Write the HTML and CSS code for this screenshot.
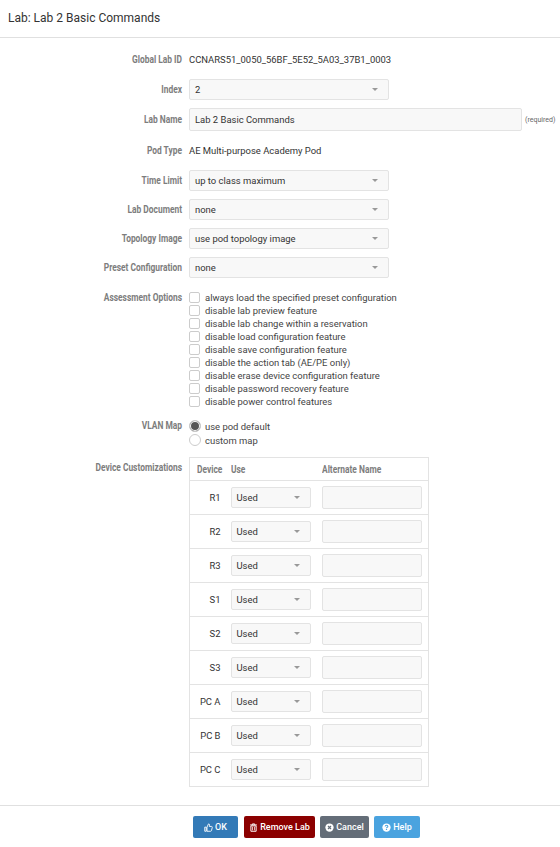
FILE: index.html
```html
<!DOCTYPE html>
<html lang="en">
<head>
    <meta charset="UTF-8">
    <title>Lab: Lab 2 Basic Commands</title>
    <link rel="stylesheet" href="styles.css">
</head>
<body>
    <header class="dialog-title">Lab: Lab 2 Basic Commands</header>

    <form class="lab-form">
        <div class="row row-id">
            <label class="row-label">Global Lab ID</label>
            <span class="value">CCNARS51_0050_56BF_5E52_5A03_37B1_0003</span>
        </div>
        <div class="row row-index">
            <label class="row-label">Index</label>
            <div class="select"><span>2</span><i class="caret"></i></div>
        </div>
        <div class="row row-name">
            <label class="row-label">Lab Name</label>
            <div class="text-input">Lab 2 Basic Commands</div>
            <span class="hint">(required)</span>
        </div>
        <div class="row row-pod">
            <label class="row-label">Pod Type</label>
            <span class="value">AE Multi-purpose Academy Pod</span>
        </div>
        <div class="row row-time">
            <label class="row-label">Time Limit</label>
            <div class="select"><span>up to class maximum</span><i class="caret"></i></div>
        </div>
        <div class="row">
            <label class="row-label">Lab Document</label>
            <div class="select"><span>none</span><i class="caret"></i></div>
        </div>
        <div class="row">
            <label class="row-label">Topology Image</label>
            <div class="select"><span>use pod topology image</span><i class="caret"></i></div>
        </div>
        <div class="row row-preset">
            <label class="row-label">Preset Configuration</label>
            <div class="select"><span>none</span><i class="caret"></i></div>
        </div>

        <div class="row row-top row-options">
            <label class="row-label">Assessment Options</label>
            <div class="checks">
                <div class="check"><i class="box"></i>always load the specified preset configuration</div>
                <div class="check"><i class="box"></i>disable lab preview feature</div>
                <div class="check"><i class="box"></i>disable lab change within a reservation</div>
                <div class="check"><i class="box"></i>disable load configuration feature</div>
                <div class="check"><i class="box"></i>disable save configuration feature</div>
                <div class="check"><i class="box"></i>disable the action tab (AE/PE only)</div>
                <div class="check"><i class="box"></i>disable erase device configuration feature</div>
                <div class="check"><i class="box"></i>disable password recovery feature</div>
                <div class="check"><i class="box"></i>disable power control features</div>
            </div>
        </div>

        <div class="row row-top row-vlan">
            <label class="row-label">VLAN Map</label>
            <div class="radios">
                <div class="radio-row"><i class="radio on"></i>use pod default</div>
                <div class="radio-row"><i class="radio"></i>custom map</div>
            </div>
        </div>

        <div class="row row-top">
            <label class="row-label label-table">Device Customizations</label>
            <table class="devices">
                <thead>
                    <tr>
                        <th class="col-device"><span>Device</span></th>
                        <th class="col-use"><span>Use</span></th>
                        <th class="col-alt"><span>Alternate Name</span></th>
                    </tr>
                </thead>
                <tbody>
                    <tr><td class="col-device">R1</td><td><div class="select select-small"><span>Used</span><i class="caret"></i></div></td><td><div class="name-input"></div></td></tr>
                    <tr><td class="col-device">R2</td><td><div class="select select-small"><span>Used</span><i class="caret"></i></div></td><td><div class="name-input"></div></td></tr>
                    <tr><td class="col-device">R3</td><td><div class="select select-small"><span>Used</span><i class="caret"></i></div></td><td><div class="name-input"></div></td></tr>
                    <tr><td class="col-device">S1</td><td><div class="select select-small"><span>Used</span><i class="caret"></i></div></td><td><div class="name-input"></div></td></tr>
                    <tr><td class="col-device">S2</td><td><div class="select select-small"><span>Used</span><i class="caret"></i></div></td><td><div class="name-input"></div></td></tr>
                    <tr><td class="col-device">S3</td><td><div class="select select-small"><span>Used</span><i class="caret"></i></div></td><td><div class="name-input"></div></td></tr>
                    <tr><td class="col-device">PC A</td><td><div class="select select-small"><span>Used</span><i class="caret"></i></div></td><td><div class="name-input"></div></td></tr>
                    <tr><td class="col-device">PC B</td><td><div class="select select-small"><span>Used</span><i class="caret"></i></div></td><td><div class="name-input"></div></td></tr>
                    <tr><td class="col-device">PC C</td><td><div class="select select-small"><span>Used</span><i class="caret"></i></div></td><td><div class="name-input"></div></td></tr>
                </tbody>
            </table>
        </div>
    </form>

    <footer class="actions">
        <button type="button" class="btn btn-ok">
            <svg class="icon" viewBox="0 0 12 12"><path d="M1 5.500h2V11H1zM4 5.500 6 1.200c1 0 1.600.7 1.400 1.800L7 4.600h3c.8 0 1.200.6 1 1.300l-1 4.200c-.2.6-.6.9-1.200.9H4z" fill="none" stroke="currentColor" stroke-width="1.200"/></svg>OK
        </button>
        <button type="button" class="btn btn-remove">
            <svg class="icon" viewBox="0 0 12 12"><path d="M1.500 2.500h9M4.500 2.500V1.200h3v1.300" fill="none" stroke="currentColor" stroke-width="1.200"/><path d="M2.500 3.800h7V11h-7z" fill="none" stroke="currentColor" stroke-width="1.300"/><path d="M4.700 5v4.800M7.300 5v4.800" stroke="currentColor"/></svg>Remove Lab
        </button>
        <button type="button" class="btn btn-cancel">
            <svg class="icon" viewBox="0 0 12 12"><circle cx="6" cy="6" r="5.500" fill="currentColor"/><path d="M4 4l4 4M8 4l-4 4" stroke="#646d78" stroke-width="1.600"/></svg>Cancel
        </button>
        <button type="button" class="btn btn-help">
            <svg class="icon" viewBox="0 0 12 12"><circle cx="6" cy="6" r="5.500" fill="currentColor"/><path d="M4.200 4.700C4.300 3.600 5 3 6 3s1.800.6 1.800 1.500C7.800 5.700 6 5.600 6 7" fill="none" stroke="#4aa3df" stroke-width="1.400"/><path d="M5.200 7.900h1.600v1.400H5.200z" fill="#4aa3df"/></svg>Help
        </button>
    </footer>
</body>
</html>
```

FILE: styles.css
```css
html, body {
    margin: 0;
    padding: 0;
    background: #fff;
    color: #333;
    font-family: Roboto, 'Liberation Sans', sans-serif;
    font-size: 9.450px;
}

.dialog-title {
    height: 37px;
    line-height: 36px;
    padding-left: 8px;
    font-size: 12px;
    color: #333;
    border-bottom: 1px solid #e0e0e0;
}

.lab-form {
    padding-top: 11px;
    height: 756px;
    box-sizing: border-box;
}

.row {
    display: flex;
    align-items: center;
    height: 21px;
    margin-bottom: 8px;
}

.row-top {
    align-items: flex-start;
    height: auto;
}

.row-id { margin-bottom: 9px; }
.row-name { height: 23px; margin-bottom: 9px; }
.row-pod { height: 20px; margin-bottom: 10px; }
.row-preset { margin-bottom: 13px; }
.row-options { margin-bottom: 11px; }
.row-vlan { margin-bottom: 10px; }

/* no condensed bold installed, squeeze Roboto to the same width */
.row-label {
    width: 182px;
    flex-shrink: 0;
    margin-right: 7px;
    text-align: right;
    font-weight: bold;
    font-size: 10.500px;
    color: #7d7d7d;
    transform: scaleX(0.8);
    transform-origin: right center;
}

.label-table { padding-top: 4px; }

.select {
    display: flex;
    align-items: center;
    justify-content: space-between;
    box-sizing: border-box;
    width: 200px;
    height: 21px;
    padding: 0 10px 0 5px;
    background: #f8f8f8;
    border: 1px solid #e3e3e3;
    border-radius: 2px;
}

.select-small { width: 80px; }

.caret {
    width: 0;
    height: 0;
    border-left: 3.500px solid transparent;
    border-right: 3.500px solid transparent;
    border-top: 3.500px solid #999;
}

.text-input {
    box-sizing: border-box;
    width: 333px;
    height: 23px;
    line-height: 21px;
    padding-left: 5px;
    background: #f8f8f8;
    border: 1px solid #e3e3e3;
    border-radius: 2px;
}

.hint {
    margin-left: 3px;
    font-size: 7px;
    color: #666;
}

.check {
    display: flex;
    align-items: center;
    height: 13px;
    color: #444;
}

.box {
    box-sizing: border-box;
    width: 11px;
    height: 11px;
    margin-right: 5px;
    background: #fff;
    border: 1px solid #ccc;
    border-radius: 2px;
}

.radio-row {
    display: flex;
    align-items: center;
    height: 14px;
    color: #444;
}

.radio {
    box-sizing: border-box;
    width: 12px;
    height: 12px;
    margin-right: 4px;
    background: #fff;
    border: 1px solid #ccc;
    border-radius: 50%;
}

.radio.on {
    background: #555;
    box-shadow: inset 0 0 0 1px #fff;
}

.devices {
    width: 240px;
    border-collapse: collapse;
    border: 1px solid #e3e3e3;
    table-layout: fixed;
}

.devices th {
    box-sizing: border-box;
    height: 23px;
    padding: 0;
    text-align: left;
    font-size: 10.500px;
    color: #7d7d7d;
}

.devices th span {
    display: inline-block;
    transform: scaleX(0.8);
    transform-origin: left center;
}

.devices td {
    box-sizing: border-box;
    height: 34px;
    padding: 0;
    border-top: 1px solid #e3e3e3;
}

.devices th.col-device { width: 41px; padding-left: 7px; }
.devices th.col-use { width: 91px; }
.devices td.col-device { text-align: right; padding-right: 10px; }

.name-input {
    box-sizing: border-box;
    width: 100px;
    height: 23px;
    background: #f8f8f8;
    border: 1px solid #e3e3e3;
    border-radius: 2px;
}

.actions {
    display: flex;
    padding: 10px 0 0 193px;
    border-top: 1px solid #e0e0e0;
    margin-top: 11px;
}

.btn {
    display: flex;
    align-items: center;
    justify-content: center;
    gap: 2px;
    height: 22px;
    padding: 0;
    margin-right: 5px;
    border: none;
    border-radius: 2px;
    color: #fff;
    font-family: Roboto, sans-serif;
    font-weight: 500;
    font-size: 9px;
}

.icon { width: 9px; height: 9px; }

.btn-ok { width: 45px; background: #337ab7; margin-right: 6px; }
.btn-remove { width: 71px; background: #8b0000; }
.btn-cancel { width: 49px; background: #646d78; }
.btn-help { width: 46px; background: #4aa3df; }
```
